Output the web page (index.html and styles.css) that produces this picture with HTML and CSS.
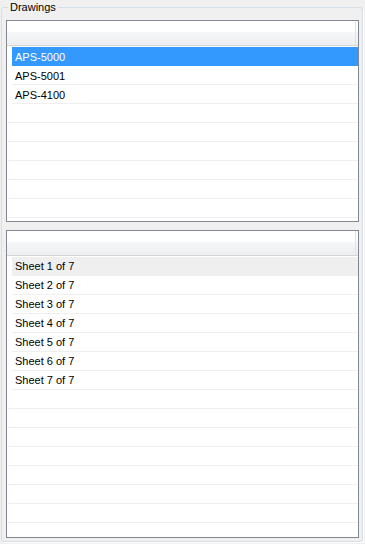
FILE: index.html
```html
<!DOCTYPE html>
<html lang="en">
<head>
    <meta charset="UTF-8">
    <meta name="viewport" content="width=device-width, initial-scale=1.0">
    <title>Drawings</title>
    <link rel="stylesheet" href="styles.css">
</head>
<body>
    <fieldset class="group">
        <legend>Drawings</legend>

        <div class="list list-drawings">
            <div class="list-header"><div class="col"></div></div>
            <div class="rows">
                <div class="row item selected">APS-5000</div>
                <div class="row item">APS-5001</div>
                <div class="row item">APS-4100</div>
                <div class="row filler"></div>
                <div class="row filler"></div>
                <div class="row filler"></div>
                <div class="row filler"></div>
                <div class="row filler"></div>
                <div class="row filler"></div>
                <div class="row filler"></div>
            </div>
        </div>

        <div class="list list-sheets">
            <div class="list-header"><div class="col"></div></div>
            <div class="rows">
                <div class="row item current">Sheet 1 of 7</div>
                <div class="row item">Sheet 2 of 7</div>
                <div class="row item">Sheet 3 of 7</div>
                <div class="row item">Sheet 4 of 7</div>
                <div class="row item">Sheet 5 of 7</div>
                <div class="row item">Sheet 6 of 7</div>
                <div class="row item">Sheet 7 of 7</div>
                <div class="row filler"></div>
                <div class="row filler"></div>
                <div class="row filler"></div>
                <div class="row filler"></div>
                <div class="row filler"></div>
                <div class="row filler"></div>
                <div class="row filler"></div>
                <div class="row filler"></div>
            </div>
        </div>
    </fieldset>
</body>
</html>
```

FILE: styles.css
```css
* {
    margin: 0;
    padding: 0;
    box-sizing: border-box;
}

body {
    background: #f0f0f0;
    font-family: 'Liberation Sans', Arial, sans-serif;
    font-size: 11px;
    color: #000;
    width: 365px;
    height: 544px;
    overflow: hidden;
}

.group {
    width: 362px;
    height: 542px;
    margin: 0 2px 2px 1px;
    padding: 5px 3px 3px 4px;
    border: 1px solid #d5dfe5;
    border-radius: 3px;
    box-shadow: 1px 1px 0 #fff;
}

.group legend {
    margin-left: 2px;
    padding: 0 2px;
    line-height: 15px;
    font-size: 11px;
}

.list {
    background: #fff;
    border: 1px solid #828790;
    overflow: hidden;
}

.list-drawings {
    height: 202px;
    margin-bottom: 8px;
}

.list-sheets {
    height: 308px;
}

.list-header {
    display: flex;
    height: 25px;
    margin-bottom: 1px;
    border-bottom: 1px solid #d5d5d5;
    background: linear-gradient(#fff 0, #fff 11px, #f6f7f8 11px, #eceef1 100%);
}

.list-header .col {
    width: 349px;
    border-right: 1px solid #dfe2e5;
}

.rows {
    padding-left: 1px;
}

.row {
    height: 19px;
    border-bottom: 1px solid #efefef;
    white-space: nowrap;
}

.row.item {
    margin-left: 4px;
    padding: 2px 0 0 3px;
    line-height: 17px;
}

.list-sheets .row.item {
    padding-top: 1px;
}

.row.selected {
    background: #3399ff;
    border-bottom-color: #3399ff;
    color: #fff;
}

.row.current {
    background: #efefef;
}
```
